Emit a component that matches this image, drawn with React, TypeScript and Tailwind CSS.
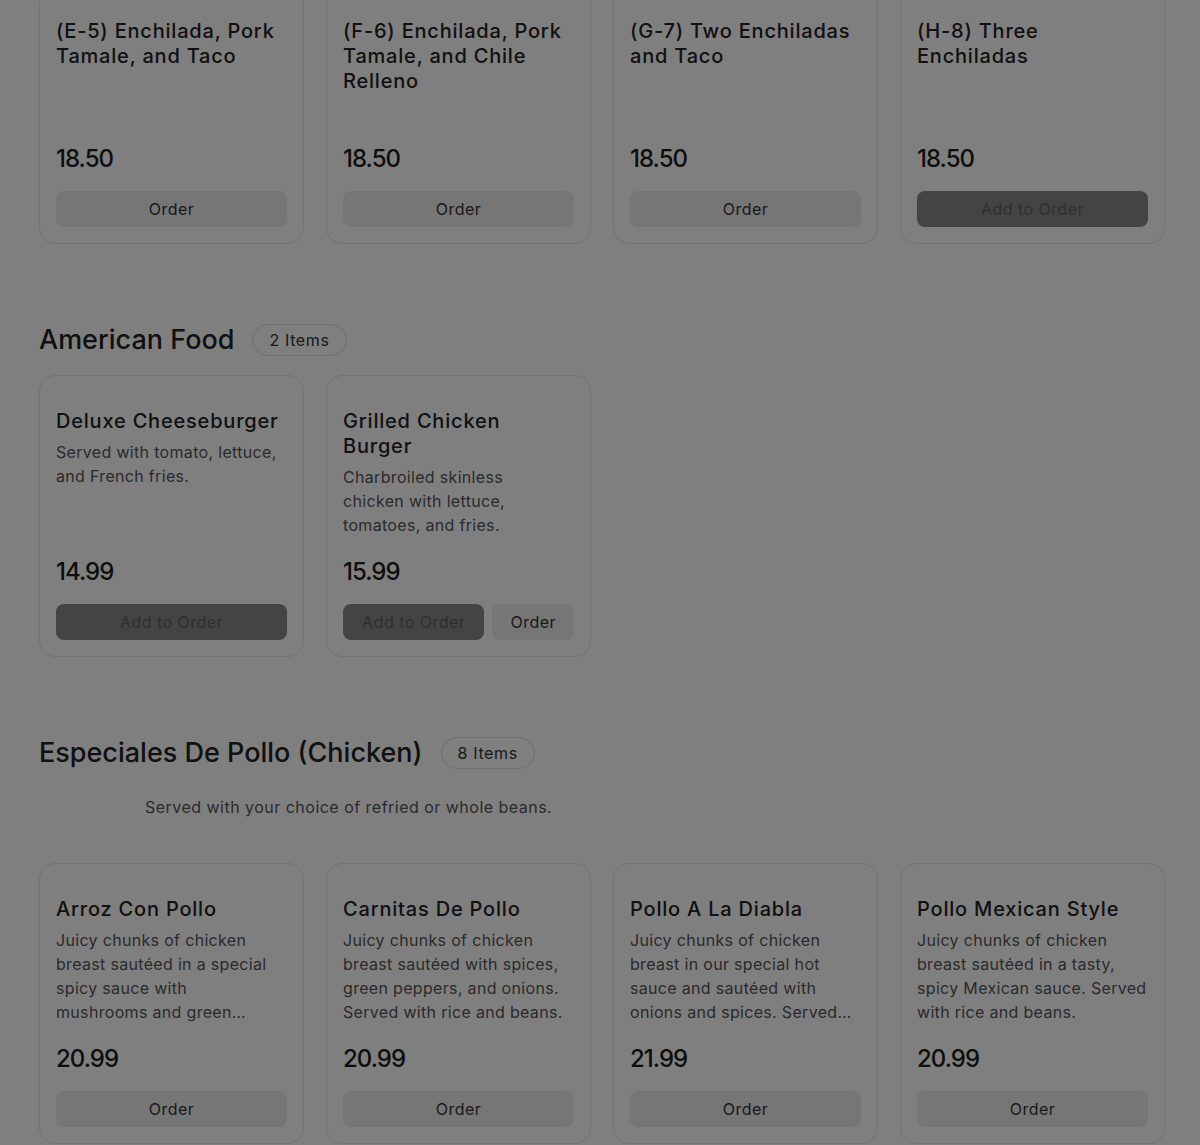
import React from "react";

type Item = {
  name: string;
  description?: string;
  price: string;
  actions: ("add" | "order")[];
};

const TOP_ITEMS: Item[] = [
  { name: "(E-5) Enchilada, Pork Tamale, and Taco", price: "18.50", actions: ["order"] },
  { name: "(F-6) Enchilada, Pork Tamale, and Chile Relleno", price: "18.50", actions: ["order"] },
  { name: "(G-7) Two Enchiladas and Taco", price: "18.50", actions: ["order"] },
  { name: "(H-8) Three Enchiladas", price: "18.50", actions: ["add"] },
];

const AMERICAN: Item[] = [
  {
    name: "Deluxe Cheeseburger",
    description: "Served with tomato, lettuce, and French fries.",
    price: "14.99",
    actions: ["add"],
  },
  {
    name: "Grilled Chicken Burger",
    description: "Charbroiled skinless chicken\u00a0with lettuce, tomatoes, and fries.",
    price: "15.99",
    actions: ["add", "order"],
  },
];

const POLLO: Item[] = [
  {
    name: "Arroz Con Pollo",
    description:
      "Juicy chunks of chicken breast sautéed in a special spicy sauce with mushrooms\u00a0and green peppers. Served with rice and beans.",
    price: "20.99",
    actions: ["order"],
  },
  {
    name: "Carnitas De Pollo",
    description: "Juicy chunks of chicken breast sautéed with spices, green peppers, and onions. Served with rice and beans.",
    price: "20.99",
    actions: ["order"],
  },
  {
    name: "Pollo A La Diabla",
    description:
      "Juicy chunks of chicken breast in our special hot sauce and sautéed with onions and spices. Served with rice and beans.",
    price: "21.99",
    actions: ["order"],
  },
  {
    name: "Pollo Mexican Style",
    description: "Juicy chunks of chicken breast sautéed in a tasty, spicy Mexican sauce. Served with rice and beans.",
    price: "20.99",
    actions: ["order"],
  },
];

function MenuCard({ item, tall }: { item: Item; tall?: boolean }) {
  const both = item.actions.length > 1;
  return (
    <div
      className={`flex flex-col rounded-2xl border border-[#e4e4e4] bg-white px-4 pt-[33px] pb-4 ${tall ? "min-h-[259px]" : ""}`}
    >
      <h3 className="text-[20px] leading-[25px] font-medium tracking-[0.04em] text-[#222]">{item.name}</h3>
      {item.description && (
        <p className="mt-[6px] line-clamp-4 text-[16px] leading-6 tracking-[0.02em] text-[#555]">
          {item.description}
        </p>
      )}
      <div className="mt-auto pt-[19px] text-[24px] leading-8 font-medium tracking-[-0.04em] text-[#1c1c1c]">
        {item.price}
      </div>
      <div className="mt-4 flex h-9 gap-2 tracking-[0.03em]">
        {item.actions.map((a) =>
          a === "add" ? (
            <button key={a} className="flex-1 rounded-lg bg-[#888888] text-[16px] text-[#5e5e5e]">
              Add to Order
            </button>
          ) : (
            <button
              key={a}
              className={`rounded-lg bg-[#ececec] text-[16px] text-[#333] ${both ? "px-[18px]" : "flex-1"}`}
            >
              Order
            </button>
          )
        )}
      </div>
    </div>
  );
}

function SectionHeader({ title, count }: { title: string; count: number }) {
  return (
    <div className="flex h-10 items-center gap-[18px]">
      <h2 className="text-[27px] font-medium text-[#222]">{title}</h2>
      <span className="flex h-8 items-center rounded-full border border-[#dcdcdc] px-4 text-[16px] tracking-[0.04em] text-[#333]">
        {count} Items
      </span>
    </div>
  );
}

export default function App() {
  return (
    <div className="relative min-h-screen overflow-hidden bg-white font-['Inter',sans-serif]">
      <main className="pl-[39px] pr-[35px] pb-10">
        <div className="-mt-[15px] grid grid-cols-4 gap-[22px]">
          {TOP_ITEMS.map((it) => (
            <MenuCard key={it.name} item={it} tall />
          ))}
        </div>

        <section className="mt-[76px]">
          <SectionHeader title="American Food" count={2} />
          <div className="mt-[15px] grid grid-cols-4 gap-[22px]">
            {AMERICAN.map((it) => (
              <MenuCard key={it.name} item={it} />
            ))}
          </div>
        </section>

        <section className="mt-[76px]">
          <SectionHeader title="Especiales De Pollo (Chicken)" count={8} />
          <p className="mt-[22px] ml-[106px] text-[16px] leading-6 tracking-[0.03em] text-[#555]">
            Served with your choice of refried or whole beans.
          </p>
          <div className="mt-[44px] grid grid-cols-4 gap-[22px]">
            {POLLO.map((it) => (
              <MenuCard key={it.name} item={it} />
            ))}
          </div>
        </section>
      </main>
      <div className="fixed inset-0 bg-black/50" />
    </div>
  );
}
